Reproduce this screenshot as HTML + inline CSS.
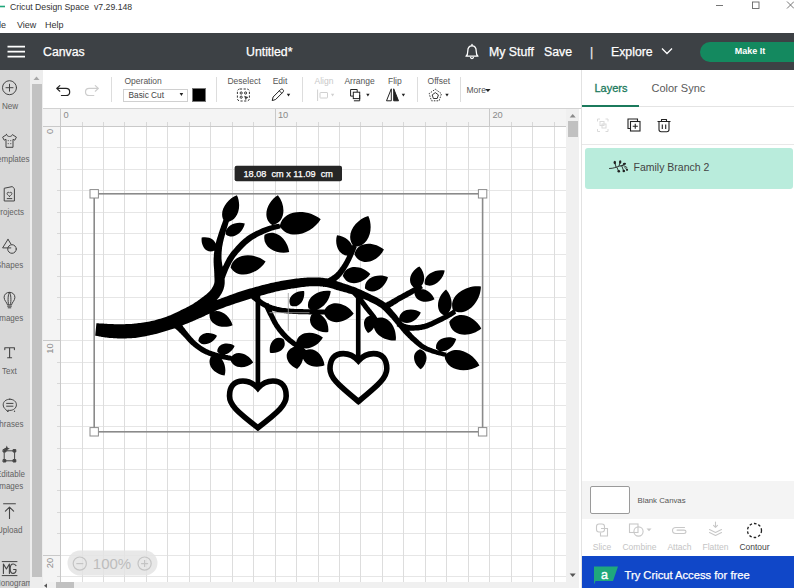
<!DOCTYPE html>
<html>
<head>
<meta charset="utf-8">
<title>Cricut Design Space</title>
<style>
*{box-sizing:border-box;margin:0;padding:0}
html,body{width:794px;height:588px;overflow:hidden;background:#fff;font-family:"Liberation Sans",sans-serif;}
body{position:relative;color:#444}
.abs{position:absolute}
.t{position:absolute;white-space:nowrap;line-height:1}
.c{position:absolute;white-space:nowrap;line-height:1;transform:translateX(-50%)}
svg{overflow:visible}
#titlebar{left:0;top:0;width:794px;height:33px;background:#fff}
#header{left:0;top:33px;width:794px;height:37px;background:#3d4145}
#sidebar{left:0;top:70px;width:30px;height:518px;background:#d8d8d8}
#sscroll{left:30px;top:70px;width:13px;height:518px;background:#ededed}
#sthumb{left:32px;top:84px;width:10px;height:493px;background:#c2c2c2}
#toolbar{left:43px;top:70px;width:538px;height:38px;background:#fff}
#rulertop{left:43px;top:108px;width:523px;height:18px;background:#f4f4f4;border-top:1px solid #cfcfcf}
#rulerleft{left:43px;top:109px;width:18px;height:473px;background:#f4f4f4}
#canvas{left:61px;top:126px;width:505px;height:456px;background:#fff}
#vscroll{left:566px;top:109px;width:13px;height:479px;background:#f0f0f0}
#vthumb{left:568px;top:121px;width:10px;height:16px;background:#c1c1c1}
#hscroll{left:43px;top:582px;width:523px;height:6px;background:#f0f0f0}
#hthumb{left:56px;top:582px;width:18px;height:6px;background:#c1c1c1}
#panel{left:581px;top:70px;width:213px;height:518px;background:#fff;border-left:1px solid #e2e2e2}
.side{font-size:9px;color:#626262}
.tb{font-size:8.5px;color:#555}
.hd{font-size:12.3px;color:#fff;top:46px;-webkit-text-stroke:0.25px #fff}
.sep{position:absolute;top:77px;width:1px;height:25px;background:#ddd}
</style>
</head>
<body>
<div id="titlebar" class="abs"></div>
<div id="header" class="abs"></div>
<div id="sidebar" class="abs"></div>
<div id="sscroll" class="abs"></div>
<div id="sthumb" class="abs"></div>
<div id="toolbar" class="abs"></div>
<div id="canvas" class="abs"></div>
<div id="rulertop" class="abs"></div>
<div id="rulerleft" class="abs"></div>
<div id="vscroll" class="abs"></div>
<div id="vthumb" class="abs"></div>
<div id="hscroll" class="abs"></div>
<div id="hthumb" class="abs"></div>
<div id="panel" class="abs"></div>

<svg width="794" height="588" viewBox="0 0 794 588" style="position:absolute;left:0;top:0">
<path d="M61,147.50H566 M61,169.50H566 M61,190.50H566 M61,212.50H566 M61,233.50H566 M61,254.50H566 M61,276.50H566 M61,297.50H566 M61,319.50H566 M61,340.50H566 M61,362.50H566 M61,383.50H566 M61,405.50H566 M61,426.50H566 M61,448.50H566 M61,469.50H566 M61,490.50H566 M61,512.50H566 M61,533.50H566 M61,555.50H566 M61,576.50H566" stroke="#e6e6e6" stroke-width="1" fill="none"/>
<path d="M82.50,126V582 M103.50,126V582 M124.50,126V582 M146.50,126V582 M167.50,126V582 M189.50,126V582 M210.50,126V582 M232.50,126V582 M253.50,126V582 M275.50,126V582 M296.50,126V582 M318.50,126V582 M339.50,126V582 M360.50,126V582 M382.50,126V582 M403.50,126V582 M425.50,126V582 M446.50,126V582 M468.50,126V582 M489.50,126V582 M511.50,126V582 M532.50,126V582 M554.50,126V582" stroke="#dddddd" stroke-width="1" fill="none"/>
<path d="M82.50,122V126 M103.50,122V126 M124.50,122V126 M146.50,122V126 M167.50,122V126 M189.50,122V126 M210.50,122V126 M232.50,122V126 M253.50,122V126 M275.50,122V126 M296.50,122V126 M318.50,122V126 M339.50,122V126 M360.50,122V126 M382.50,122V126 M403.50,122V126 M425.50,122V126 M446.50,122V126 M468.50,122V126 M489.50,122V126 M511.50,122V126 M532.50,122V126 M554.50,122V126 M57,147.50H61 M57,169.50H61 M57,190.50H61 M57,212.50H61 M57,233.50H61 M57,254.50H61 M57,276.50H61 M57,297.50H61 M57,319.50H61 M57,340.50H61 M57,362.50H61 M57,383.50H61 M57,405.50H61 M57,426.50H61 M57,448.50H61 M57,469.50H61 M57,490.50H61 M57,512.50H61 M57,533.50H61 M57,555.50H61 M57,576.50H61" stroke="#d8d8d8" stroke-width="1" fill="none"/>
<path d="M60.50,109V126 M43,126.50H61 M275.50,109V126 M43,340.50H61 M489.50,109V126 M43,555.50H61 M60.50,126V582 M61,126.50H566" stroke="#c9c9c9" stroke-width="1" fill="none"/>
<text x="63.4" y="118.3" font-size="9.3" fill="#8a8a8a" font-family="Liberation Sans, sans-serif">0</text>
<text transform="translate(52.5,128.8) rotate(-90)" text-anchor="end" font-size="9.3" fill="#8a8a8a" font-family="Liberation Sans, sans-serif">0</text>
<text x="277.9" y="118.3" font-size="9.3" fill="#8a8a8a" font-family="Liberation Sans, sans-serif">10</text>
<text transform="translate(52.5,343.3) rotate(-90)" text-anchor="end" font-size="9.3" fill="#8a8a8a" font-family="Liberation Sans, sans-serif">10</text>
<text x="492.4" y="118.3" font-size="9.3" fill="#8a8a8a" font-family="Liberation Sans, sans-serif">20</text>
<text transform="translate(52.5,557.8) rotate(-90)" text-anchor="end" font-size="9.3" fill="#8a8a8a" font-family="Liberation Sans, sans-serif">20</text>
</svg>
<svg width="794" height="588" viewBox="0 0 794 588" style="position:absolute;left:0;top:0" id="art">
<path fill="#000" d="M96.4,323.3 L96.5,323.3 L96.7,323.3 L96.9,323.3 L97.1,323.3 L97.4,323.3 L97.6,323.3 L98.0,323.3 L98.3,323.3 L98.6,323.3 L99.0,323.4 L99.3,323.4 L99.7,323.4 L100.1,323.4 L100.5,323.4 L100.9,323.5 L101.3,323.5 L101.6,323.5 L102.0,323.5 L102.4,323.6 L102.9,323.6 L103.3,323.6 L103.7,323.6 L104.2,323.7 L104.7,323.7 L105.3,323.7 L105.8,323.8 L106.4,323.8 L107.0,323.8 L107.6,323.9 L108.2,323.9 L108.9,324.0 L109.5,324.0 L110.2,324.0 L110.9,324.1 L111.6,324.1 L112.3,324.1 L113.2,324.1 L114.0,324.2 L114.9,324.2 L115.9,324.2 L116.9,324.2 L117.8,324.2 L118.8,324.2 L119.8,324.2 L120.9,324.2 L121.9,324.2 L122.9,324.2 L123.9,324.2 L124.9,324.2 L125.9,324.1 L126.9,324.1 L127.8,324.1 L128.8,324.1 L129.7,324.0 L130.7,324.0 L131.7,323.9 L132.7,323.8 L133.7,323.7 L134.8,323.6 L136.0,323.5 L137.4,323.3 L138.8,323.1 L140.2,322.9 L141.7,322.7 L143.3,322.5 L144.9,322.2 L146.5,322.0 L148.1,321.7 L149.7,321.4 L151.3,321.0 L152.8,320.7 L154.3,320.4 L155.8,320.0 L157.3,319.6 L158.9,319.1 L160.4,318.7 L161.9,318.2 L163.4,317.7 L165.0,317.2 L166.5,316.7 L168.0,316.1 L169.6,315.6 L171.2,315.0 L172.7,314.5 L174.3,313.9 L175.9,313.4 L177.5,312.8 L179.1,312.1 L180.8,311.5 L182.4,310.8 L184.1,310.2 L185.7,309.6 L187.3,309.0 L188.8,308.4 L190.2,307.9 L191.6,307.4 L192.8,306.9 L194.0,306.5 L195.1,306.1 L196.2,305.7 L197.2,305.4 L198.2,305.1 L199.1,304.8 L200.1,304.4 L201.0,304.1 L202.0,303.9 L203.0,303.6 L204.0,303.3 L204.9,303.0 L205.9,302.8 L206.8,302.6 L207.6,302.4 L208.5,302.2 L209.3,302.0 L210.2,301.9 L211.1,301.7 L212.0,301.4 L213.1,301.2 L214.2,300.9 L215.4,300.5 L216.7,300.0 L218.2,299.5 L219.8,299.0 L221.4,298.3 L223.1,297.7 L224.9,297.0 L226.6,296.4 L228.4,295.7 L230.2,295.0 L232.0,294.4 L233.8,293.7 L235.4,293.2 L237.1,292.6 L238.7,292.1 L240.3,291.6 L241.9,291.0 L243.5,290.5 L245.1,290.1 L246.7,289.6 L248.3,289.1 L249.9,288.6 L251.5,288.2 L253.1,287.7 L254.7,287.3 L256.2,286.8 L257.8,286.4 L259.4,286.0 L261.0,285.5 L262.6,285.1 L264.2,284.7 L265.9,284.3 L267.5,283.9 L269.1,283.5 L270.7,283.1 L272.3,282.7 L274.0,282.4 L275.6,282.0 L277.2,281.7 L278.9,281.4 L280.5,281.1 L282.1,280.8 L283.7,280.5 L285.4,280.2 L287.0,280.0 L288.6,279.7 L290.2,279.5 L291.8,279.3 L293.4,279.0 L294.9,278.8 L296.5,278.6 L298.1,278.5 L299.6,278.3 L301.2,278.1 L302.8,278.0 L304.3,277.8 L305.9,277.7 L307.4,277.6 L308.9,277.5 L310.4,277.4 L311.9,277.4 L313.3,277.4 L314.7,277.4 L316.1,277.4 L317.4,277.5 L318.8,277.5 L320.1,277.6 L321.4,277.7 L322.7,277.8 L324.0,278.0 L325.2,278.2 L326.5,278.3 L327.7,278.6 L329.0,278.8 L330.2,279.1 L331.4,279.4 L332.6,279.7 L333.7,280.1 L334.8,280.4 L335.9,280.8 L336.9,281.2 L338.0,281.5 L339.1,281.9 L340.1,282.3 L341.2,282.6 L342.4,283.0 L343.6,283.4 L344.8,283.8 L346.0,284.2 L347.3,284.6 L348.5,285.0 L349.8,285.5 L351.1,285.9 L352.4,286.4 L353.7,286.8 L355.0,287.3 L356.3,287.8 L357.6,288.4 L358.9,288.9 L360.2,289.5 L361.5,290.1 L362.8,290.7 L364.1,291.3 L365.4,291.9 L366.7,292.5 L367.9,293.1 L369.2,293.7 L370.4,294.3 L371.5,294.9 L372.7,295.4 L373.8,296.0 L374.9,296.5 L376.0,297.1 L377.1,297.6 L378.1,298.2 L379.2,298.8 L380.3,299.4 L381.3,300.0 L382.3,300.7 L383.3,301.3 L384.3,302.1 L385.3,302.8 L386.2,303.6 L387.1,304.4 L387.9,305.2 L388.8,306.0 L389.5,306.9 L390.3,307.7 L391.0,308.5 L391.7,309.3 L392.4,310.1 L393.1,310.9 L393.8,311.7 L394.5,312.4 L395.1,313.2 L395.8,314.0 L396.4,314.8 L397.1,315.6 L397.7,316.4 L398.3,317.2 L398.8,318.0 L399.4,318.7 L400.0,319.5 L400.6,320.2 L401.2,321.0 L401.8,321.8 L402.5,322.5 L403.1,323.3 L403.7,324.1 L404.3,324.8 L404.9,325.6 L405.5,326.3 L406.1,327.1 L406.7,327.8 L407.3,328.6 L408.0,329.3 L408.6,330.0 L409.3,330.8 L410.0,331.6 L410.7,332.3 L411.5,333.1 L412.2,333.9 L412.9,334.7 L413.7,335.4 L414.4,336.2 L415.2,336.9 L415.9,337.6 L416.7,338.3 L417.4,339.0 L418.1,339.6 L418.8,340.3 L419.5,340.9 L420.2,341.5 L420.9,342.1 L421.5,342.6 L422.2,343.2 L422.9,343.7 L423.6,344.2 L424.3,344.7 L425.0,345.1 L425.8,345.6 L426.6,346.0 L427.5,346.5 L428.4,346.9 L429.4,347.3 L430.4,347.7 L431.4,348.1 L432.5,348.5 L433.5,348.9 L434.5,349.2 L435.5,349.6 L436.5,349.9 L437.4,350.2 L438.3,350.5 L439.1,350.8 L440.0,351.0 L440.9,351.3 L441.8,351.5 L442.6,351.8 L443.4,352.0 L444.2,352.2 L444.9,352.3 L445.5,352.5 L446.1,352.6 L446.5,352.8 L445.5,356.8 L445.1,356.7 L444.5,356.6 L443.9,356.5 L443.2,356.4 L442.4,356.2 L441.6,356.0 L440.7,355.8 L439.8,355.6 L438.9,355.4 L437.9,355.1 L436.9,354.9 L436.0,354.6 L435.1,354.3 L434.1,354.0 L433.1,353.7 L432.0,353.4 L430.9,353.0 L429.8,352.6 L428.7,352.2 L427.6,351.8 L426.5,351.4 L425.5,351.0 L424.4,350.5 L423.4,350.0 L422.5,349.5 L421.6,349.0 L420.7,348.4 L419.9,347.9 L419.1,347.3 L418.3,346.7 L417.5,346.1 L416.8,345.5 L416.1,344.9 L415.3,344.3 L414.6,343.7 L413.8,343.0 L413.0,342.3 L412.2,341.6 L411.4,340.9 L410.6,340.2 L409.8,339.4 L409.0,338.6 L408.2,337.9 L407.4,337.1 L406.6,336.3 L405.8,335.5 L405.1,334.7 L404.4,334.0 L403.6,333.2 L402.9,332.4 L402.3,331.6 L401.6,330.9 L401.0,330.1 L400.3,329.3 L399.7,328.6 L399.1,327.8 L398.4,327.0 L397.8,326.3 L397.2,325.6 L396.6,324.8 L395.9,324.0 L395.3,323.3 L394.7,322.5 L394.1,321.8 L393.4,321.0 L392.8,320.3 L392.2,319.5 L391.6,318.8 L391.0,318.1 L390.3,317.4 L389.7,316.7 L389.0,315.9 L388.3,315.2 L387.6,314.4 L386.9,313.7 L386.2,312.9 L385.5,312.2 L384.8,311.4 L384.0,310.7 L383.3,310.0 L382.6,309.4 L381.8,308.7 L381.1,308.1 L380.3,307.5 L379.5,307.0 L378.6,306.4 L377.7,305.9 L376.8,305.3 L375.9,304.8 L374.9,304.3 L373.9,303.8 L372.9,303.3 L371.8,302.7 L370.7,302.2 L369.6,301.7 L368.5,301.1 L367.3,300.6 L366.1,300.1 L364.9,299.5 L363.7,299.0 L362.5,298.4 L361.2,297.9 L359.9,297.4 L358.7,296.9 L357.4,296.4 L356.1,295.9 L354.9,295.4 L353.7,295.0 L352.4,294.5 L351.2,294.1 L350.0,293.7 L348.7,293.4 L347.5,293.0 L346.2,292.6 L344.9,292.3 L343.7,291.9 L342.4,291.6 L341.2,291.3 L340.0,290.9 L338.8,290.6 L337.6,290.2 L336.4,289.9 L335.3,289.5 L334.2,289.2 L333.2,288.8 L332.2,288.5 L331.2,288.2 L330.2,287.9 L329.3,287.7 L328.3,287.4 L327.3,287.2 L326.3,287.0 L325.2,286.9 L324.1,286.7 L323.0,286.6 L321.8,286.5 L320.7,286.4 L319.5,286.3 L318.3,286.2 L317.1,286.2 L315.9,286.2 L314.7,286.2 L313.4,286.2 L312.1,286.2 L310.8,286.3 L309.4,286.3 L308.1,286.4 L306.6,286.6 L305.2,286.7 L303.7,286.9 L302.2,287.1 L300.7,287.3 L299.2,287.5 L297.7,287.7 L296.2,287.9 L294.6,288.2 L293.1,288.4 L291.6,288.6 L290.0,288.9 L288.5,289.1 L286.9,289.4 L285.4,289.7 L283.8,290.0 L282.3,290.3 L280.7,290.6 L279.1,291.0 L277.6,291.3 L276.0,291.6 L274.5,292.0 L272.9,292.4 L271.4,292.8 L269.9,293.2 L268.3,293.6 L266.8,294.0 L265.2,294.5 L263.6,294.9 L262.1,295.3 L260.5,295.8 L258.9,296.3 L257.3,296.7 L255.8,297.2 L254.2,297.6 L252.7,298.1 L251.1,298.5 L249.5,299.0 L248.0,299.5 L246.4,299.9 L244.9,300.4 L243.3,300.9 L241.7,301.4 L240.1,301.9 L238.6,302.4 L236.9,303.0 L235.2,303.6 L233.5,304.2 L231.7,304.8 L229.9,305.4 L228.1,306.0 L226.4,306.6 L224.7,307.3 L223.0,307.9 L221.5,308.4 L220.0,309.0 L218.6,309.5 L217.4,310.0 L216.3,310.5 L215.3,310.9 L214.3,311.3 L213.5,311.7 L212.7,312.1 L211.9,312.5 L211.2,312.8 L210.5,313.2 L209.7,313.6 L208.9,313.9 L208.0,314.3 L207.2,314.7 L206.3,315.1 L205.4,315.5 L204.6,316.0 L203.7,316.4 L202.8,316.8 L201.9,317.2 L200.9,317.7 L199.9,318.1 L198.8,318.6 L197.6,319.1 L196.4,319.6 L195.1,320.2 L193.7,320.8 L192.2,321.4 L190.7,322.0 L189.1,322.7 L187.4,323.4 L185.7,324.1 L184.0,324.7 L182.3,325.4 L180.6,326.1 L178.9,326.7 L177.3,327.3 L175.7,327.9 L174.1,328.4 L172.5,329.0 L170.8,329.5 L169.2,330.1 L167.6,330.6 L165.9,331.1 L164.3,331.6 L162.6,332.1 L161.0,332.5 L159.3,333.0 L157.7,333.4 L156.0,333.9 L154.3,334.3 L152.5,334.7 L150.8,335.1 L149.1,335.5 L147.4,335.8 L145.7,336.2 L144.1,336.5 L142.4,336.8 L140.9,337.1 L139.4,337.3 L138.0,337.5 L136.6,337.7 L135.2,337.9 L133.9,338.0 L132.7,338.1 L131.5,338.2 L130.4,338.3 L129.3,338.3 L128.2,338.3 L127.2,338.3 L126.2,338.4 L125.2,338.4 L124.1,338.4 L123.1,338.4 L121.9,338.4 L120.8,338.4 L119.7,338.4 L118.6,338.4 L117.5,338.4 L116.5,338.3 L115.4,338.3 L114.4,338.2 L113.5,338.2 L112.6,338.1 L111.7,338.1 L110.8,338.0 L109.9,338.0 L109.1,337.9 L108.3,337.8 L107.6,337.7 L106.9,337.6 L106.2,337.5 L105.6,337.4 L105.0,337.4 L104.4,337.3 L103.8,337.2 L103.3,337.1 L102.8,337.0 L102.2,337.0 L101.7,336.9 L101.2,336.8 L100.8,336.7 L100.4,336.6 L100.0,336.5 L99.6,336.5 L99.2,336.4 L98.9,336.3 L98.6,336.3 L98.3,336.2 L98.0,336.2 L97.7,336.1 L97.4,336.0 L97.1,336.0 L96.8,335.9 L96.5,335.9 L96.3,335.8 L96.0,335.8 L95.8,335.8 L95.6,335.7 L95.4,335.7 L95.2,335.7Z M229.0,221.4 L228.8,222.0 L228.5,222.8 L228.2,223.8 L227.9,224.8 L227.6,225.9 L227.2,227.1 L226.8,228.4 L226.4,229.6 L226.1,230.9 L225.7,232.1 L225.4,233.3 L225.1,234.4 L224.8,235.5 L224.5,236.6 L224.2,237.7 L223.9,238.8 L223.6,239.9 L223.4,241.0 L223.1,242.1 L222.9,243.1 L222.7,244.2 L222.5,245.2 L222.3,246.3 L222.1,247.3 L222.0,248.3 L221.9,249.4 L221.8,250.4 L221.7,251.5 L221.6,252.5 L221.6,253.6 L221.5,254.6 L221.5,255.7 L221.5,256.7 L221.5,257.8 L221.5,258.8 L221.6,259.8 L221.7,260.8 L221.8,261.8 L222.0,262.8 L222.1,263.8 L222.3,264.9 L222.5,266.0 L222.8,267.0 L223.0,268.1 L223.2,269.3 L223.4,270.4 L223.6,271.5 L223.7,272.6 L223.9,273.6 L224.0,274.6 L224.1,275.6 L224.3,276.6 L224.4,277.6 L224.6,278.6 L224.7,279.7 L224.7,280.8 L224.7,282.0 L224.7,283.1 L224.6,284.3 L224.4,285.6 L224.2,286.7 L223.9,287.8 L223.6,288.9 L223.2,289.9 L222.8,291.0 L222.3,292.0 L221.8,292.9 L221.3,293.9 L220.7,294.8 L220.2,295.7 L219.6,296.5 L218.9,297.4 L218.2,298.3 L217.5,299.1 L216.7,299.9 L216.0,300.7 L215.2,301.5 L214.4,302.2 L213.5,302.9 L212.7,303.5 L211.8,304.2 L211.0,304.8 L210.1,305.4 L209.2,306.0 L208.2,306.6 L207.2,307.2 L206.2,307.8 L205.1,308.4 L204.0,309.0 L202.9,309.5 L201.8,310.1 L200.6,310.6 L199.5,311.1 L198.3,311.6 L197.1,312.1 L195.9,312.6 L194.7,313.0 L193.5,313.4 L192.2,313.9 L190.9,314.2 L189.6,314.6 L188.3,315.0 L187.1,315.3 L185.8,315.6 L184.6,315.9 L183.3,316.2 L182.2,316.5 L181.0,316.8 L179.9,317.1 L178.6,317.4 L177.4,317.7 L176.2,317.9 L175.0,318.2 L173.8,318.4 L172.7,318.6 L171.6,318.8 L170.7,319.0 L169.8,319.2 L169.1,319.3 L168.5,319.4 L167.5,316.6 L168.1,316.3 L168.8,316.0 L169.6,315.6 L170.5,315.2 L171.4,314.8 L172.5,314.3 L173.5,313.8 L174.6,313.3 L175.7,312.7 L176.9,312.2 L177.9,311.7 L179.0,311.2 L180.0,310.7 L181.1,310.1 L182.3,309.6 L183.4,309.0 L184.5,308.5 L185.7,307.9 L186.8,307.3 L187.9,306.8 L189.0,306.2 L190.1,305.6 L191.1,305.0 L192.1,304.4 L193.0,303.9 L194.0,303.2 L195.0,302.6 L195.9,302.0 L196.8,301.4 L197.8,300.7 L198.7,300.1 L199.6,299.5 L200.4,298.8 L201.2,298.2 L202.1,297.6 L202.8,297.0 L203.6,296.4 L204.4,295.8 L205.1,295.2 L205.8,294.7 L206.5,294.2 L207.2,293.6 L207.8,293.1 L208.3,292.6 L208.9,292.1 L209.4,291.6 L209.8,291.1 L210.3,290.6 L210.7,290.0 L211.2,289.4 L211.6,288.8 L212.0,288.2 L212.3,287.6 L212.7,287.0 L213.0,286.4 L213.3,285.8 L213.6,285.2 L213.8,284.6 L214.0,284.0 L214.2,283.4 L214.3,282.9 L214.4,282.3 L214.5,281.6 L214.5,280.9 L214.5,280.1 L214.5,279.3 L214.5,278.4 L214.4,277.5 L214.4,276.5 L214.3,275.5 L214.3,274.4 L214.3,273.4 L214.2,272.4 L214.2,271.4 L214.1,270.4 L214.1,269.4 L214.0,268.3 L213.9,267.2 L213.8,266.0 L213.7,264.8 L213.7,263.6 L213.6,262.4 L213.6,261.2 L213.6,260.0 L213.6,258.8 L213.7,257.6 L213.8,256.5 L213.8,255.3 L213.9,254.2 L214.0,253.0 L214.2,251.9 L214.3,250.7 L214.5,249.6 L214.6,248.4 L214.8,247.3 L215.1,246.1 L215.3,244.9 L215.6,243.8 L215.9,242.6 L216.2,241.5 L216.5,240.3 L216.8,239.2 L217.2,238.1 L217.5,237.0 L217.9,235.9 L218.2,234.8 L218.6,233.7 L218.9,232.6 L219.3,231.5 L219.7,230.2 L220.1,229.0 L220.6,227.7 L221.0,226.5 L221.4,225.2 L221.9,224.0 L222.3,222.9 L222.6,221.9 L223.0,221.0 L223.2,220.2 L223.4,219.6Z M218.4,277.9 L218.6,277.3 L218.9,276.5 L219.2,275.6 L219.6,274.5 L220.1,273.4 L220.5,272.2 L221.0,270.9 L221.6,269.6 L222.1,268.3 L222.6,267.1 L223.2,265.8 L223.8,264.7 L224.3,263.6 L224.8,262.5 L225.3,261.5 L225.9,260.5 L226.4,259.4 L227.0,258.3 L227.6,257.3 L228.3,256.2 L229.1,255.0 L229.8,253.9 L230.7,252.8 L231.6,251.6 L232.6,250.4 L233.7,249.2 L234.8,247.9 L236.0,246.6 L237.2,245.2 L238.4,243.9 L239.8,242.6 L241.1,241.3 L242.5,240.1 L243.9,238.8 L245.3,237.7 L246.7,236.6 L248.2,235.6 L249.7,234.6 L251.2,233.7 L252.8,232.8 L254.4,231.9 L256.0,231.1 L257.5,230.4 L259.1,229.7 L260.6,229.0 L262.1,228.3 L263.6,227.8 L265.0,227.2 L266.4,226.7 L267.8,226.2 L269.3,225.8 L270.7,225.4 L272.1,225.1 L273.5,224.8 L274.8,224.6 L276.0,224.3 L277.0,224.1 L278.0,224.0 L278.8,223.8 L279.4,223.7 L280.6,228.3 L279.9,228.5 L279.0,228.7 L278.1,229.0 L277.0,229.2 L275.9,229.5 L274.7,229.8 L273.4,230.2 L272.1,230.6 L270.8,231.0 L269.6,231.4 L268.3,231.9 L267.0,232.4 L265.8,233.0 L264.4,233.6 L263.0,234.2 L261.5,234.9 L260.1,235.6 L258.6,236.3 L257.1,237.1 L255.7,237.9 L254.3,238.8 L252.9,239.6 L251.6,240.5 L250.3,241.4 L249.0,242.4 L247.8,243.4 L246.5,244.5 L245.3,245.7 L244.0,246.9 L242.8,248.2 L241.6,249.4 L240.5,250.7 L239.3,251.9 L238.3,253.1 L237.3,254.3 L236.4,255.4 L235.5,256.5 L234.8,257.5 L234.1,258.5 L233.5,259.4 L232.9,260.4 L232.3,261.3 L231.8,262.3 L231.3,263.3 L230.8,264.3 L230.3,265.3 L229.8,266.3 L229.2,267.3 L228.7,268.4 L228.2,269.5 L227.7,270.7 L227.2,271.9 L226.7,273.2 L226.2,274.4 L225.8,275.6 L225.3,276.7 L225.0,277.7 L224.6,278.7 L224.3,279.5 L224.0,280.1Z M175.5,316.5 L175.8,316.9 L176.1,317.3 L176.5,317.9 L177.0,318.5 L177.5,319.2 L178.1,319.9 L178.7,320.7 L179.3,321.4 L179.9,322.2 L180.5,323.0 L181.1,323.8 L181.7,324.5 L182.2,325.2 L182.8,325.9 L183.3,326.7 L183.8,327.4 L184.4,328.1 L184.9,328.8 L185.4,329.5 L186.0,330.2 L186.5,330.9 L187.1,331.6 L187.6,332.3 L188.2,333.0 L188.8,333.8 L189.4,334.5 L190.0,335.2 L190.7,336.0 L191.3,336.7 L191.9,337.4 L192.5,338.1 L193.2,338.8 L193.8,339.5 L194.5,340.2 L195.1,340.8 L195.8,341.4 L196.5,342.1 L197.3,342.7 L198.0,343.3 L198.8,343.9 L199.5,344.5 L200.3,345.1 L201.1,345.7 L201.9,346.2 L202.7,346.8 L203.6,347.3 L204.4,347.8 L205.3,348.3 L206.1,348.7 L207.0,349.2 L207.9,349.6 L208.8,350.0 L209.7,350.4 L210.6,350.8 L211.6,351.1 L212.6,351.5 L213.6,351.8 L214.6,352.1 L215.6,352.5 L216.7,352.8 L217.8,353.1 L219.1,353.4 L220.4,353.7 L221.8,354.0 L223.3,354.3 L224.7,354.6 L226.1,354.9 L227.4,355.1 L228.7,355.4 L229.8,355.6 L230.7,355.7 L231.5,355.9 L230.5,360.7 L229.8,360.6 L228.9,360.4 L227.8,360.2 L226.6,360.0 L225.2,359.8 L223.8,359.6 L222.3,359.3 L220.8,359.0 L219.4,358.7 L217.9,358.4 L216.6,358.1 L215.3,357.8 L214.1,357.5 L213.0,357.1 L211.9,356.8 L210.8,356.4 L209.8,356.0 L208.7,355.7 L207.7,355.2 L206.7,354.8 L205.7,354.4 L204.7,353.9 L203.7,353.4 L202.7,352.9 L201.8,352.4 L200.8,351.9 L199.9,351.3 L199.0,350.7 L198.1,350.1 L197.2,349.5 L196.3,348.8 L195.5,348.2 L194.6,347.6 L193.8,346.9 L193.0,346.2 L192.2,345.6 L191.4,344.9 L190.6,344.2 L189.9,343.4 L189.1,342.7 L188.4,341.9 L187.7,341.2 L187.0,340.5 L186.4,339.7 L185.7,339.0 L185.1,338.3 L184.4,337.6 L183.8,337.0 L183.2,336.3 L182.5,335.6 L181.9,335.0 L181.2,334.3 L180.6,333.6 L180.0,333.0 L179.4,332.4 L178.8,331.8 L178.2,331.2 L177.5,330.6 L176.9,330.0 L176.3,329.5 L175.7,328.9 L175.0,328.4 L174.3,327.8 L173.5,327.2 L172.8,326.7 L172.0,326.1 L171.3,325.6 L170.6,325.1 L170.0,324.6 L169.4,324.2 L168.9,323.8 L168.5,323.5Z M252.4,290.5 L252.7,290.9 L253.1,291.3 L253.6,291.8 L254.0,292.4 L254.6,293.0 L255.1,293.6 L255.7,294.2 L256.3,294.9 L256.9,295.5 L257.6,296.2 L258.2,296.7 L258.8,297.3 L259.4,297.8 L260.1,298.3 L260.7,298.9 L261.4,299.4 L262.1,299.9 L262.7,300.4 L263.4,300.9 L264.1,301.4 L264.9,301.8 L265.6,302.3 L266.4,302.7 L267.2,303.1 L268.0,303.5 L268.8,303.9 L269.7,304.3 L270.6,304.7 L271.6,305.0 L272.5,305.4 L273.5,305.7 L274.5,306.0 L275.5,306.3 L276.5,306.6 L277.5,306.9 L278.6,307.1 L279.6,307.3 L280.6,307.5 L281.7,307.7 L282.8,307.9 L283.9,308.0 L285.0,308.1 L286.2,308.3 L287.3,308.4 L288.5,308.5 L289.7,308.6 L290.9,308.7 L292.2,308.8 L293.4,308.8 L294.7,308.9 L295.9,309.0 L297.2,309.0 L298.5,309.1 L299.9,309.1 L301.2,309.1 L302.6,309.1 L303.9,309.2 L305.3,309.2 L306.7,309.2 L308.1,309.3 L309.5,309.3 L311.0,309.3 L312.6,309.3 L314.3,309.4 L315.9,309.4 L317.5,309.4 L319.1,309.5 L320.6,309.5 L321.9,309.5 L323.2,309.5 L324.2,309.5 L325.0,309.6 L325.0,314.4 L324.2,314.4 L323.1,314.4 L321.9,314.4 L320.5,314.4 L319.0,314.4 L317.5,314.4 L315.8,314.4 L314.2,314.4 L312.5,314.4 L310.9,314.4 L309.4,314.4 L307.9,314.3 L306.6,314.3 L305.2,314.3 L303.8,314.3 L302.5,314.3 L301.1,314.2 L299.8,314.2 L298.4,314.2 L297.1,314.1 L295.7,314.1 L294.4,314.0 L293.1,313.9 L291.8,313.8 L290.6,313.8 L289.3,313.7 L288.1,313.6 L286.9,313.4 L285.7,313.3 L284.5,313.2 L283.3,313.1 L282.1,312.9 L280.9,312.7 L279.8,312.5 L278.6,312.3 L277.4,312.1 L276.3,311.8 L275.2,311.6 L274.1,311.3 L273.0,310.9 L271.9,310.6 L270.8,310.3 L269.8,309.9 L268.8,309.5 L267.8,309.1 L266.8,308.7 L265.8,308.3 L264.8,307.9 L263.9,307.4 L263.0,306.9 L262.1,306.4 L261.3,305.9 L260.4,305.4 L259.6,304.9 L258.9,304.3 L258.1,303.8 L257.4,303.3 L256.6,302.8 L255.9,302.2 L255.2,301.7 L254.5,301.2 L253.7,300.6 L252.9,300.0 L252.2,299.4 L251.5,298.7 L250.7,298.1 L250.1,297.6 L249.4,297.0 L248.9,296.5 L248.4,296.1 L248.0,295.8 L247.6,295.5Z M268.5,302.9 L268.7,303.4 L269.0,303.9 L269.3,304.6 L269.6,305.4 L270.0,306.2 L270.4,307.1 L270.8,308.1 L271.2,309.0 L271.6,310.0 L272.1,310.9 L272.5,311.9 L273.0,312.8 L273.4,313.8 L273.9,314.8 L274.4,315.8 L274.9,316.8 L275.4,317.8 L275.9,318.9 L276.5,319.9 L277.0,320.9 L277.6,321.9 L278.1,322.9 L278.7,323.9 L279.4,324.8 L280.0,325.8 L280.7,326.7 L281.4,327.7 L282.2,328.7 L283.0,329.6 L283.8,330.6 L284.6,331.5 L285.4,332.4 L286.2,333.3 L287.0,334.2 L287.8,335.0 L288.5,335.8 L289.3,336.5 L290.0,337.1 L290.7,337.8 L291.5,338.4 L292.2,339.0 L293.0,339.6 L293.8,340.2 L294.5,340.8 L295.3,341.4 L296.1,342.0 L296.9,342.6 L297.7,343.2 L298.5,343.9 L299.3,344.5 L300.2,345.2 L301.0,345.9 L301.9,346.6 L302.7,347.3 L303.5,348.0 L304.3,348.6 L305.0,349.2 L305.6,349.7 L306.1,350.1 L306.5,350.5 L303.5,354.3 L303.0,354.0 L302.5,353.5 L301.9,353.0 L301.2,352.5 L300.4,351.9 L299.6,351.2 L298.7,350.5 L297.9,349.9 L297.0,349.2 L296.1,348.5 L295.3,347.8 L294.5,347.2 L293.8,346.6 L293.0,346.0 L292.2,345.5 L291.5,344.9 L290.7,344.3 L289.9,343.7 L289.1,343.1 L288.2,342.4 L287.4,341.7 L286.6,341.0 L285.7,340.3 L284.9,339.4 L284.0,338.6 L283.2,337.7 L282.3,336.8 L281.5,335.9 L280.6,334.9 L279.8,333.9 L279.0,332.9 L278.1,331.9 L277.3,330.9 L276.5,329.8 L275.8,328.8 L275.0,327.8 L274.3,326.7 L273.7,325.6 L273.0,324.5 L272.4,323.4 L271.8,322.3 L271.3,321.3 L270.7,320.2 L270.2,319.1 L269.7,318.1 L269.2,317.1 L268.7,316.1 L268.2,315.2 L267.7,314.2 L267.3,313.2 L266.8,312.2 L266.3,311.2 L265.9,310.3 L265.4,309.3 L265.0,308.4 L264.6,307.6 L264.3,306.8 L264.0,306.2 L263.7,305.6 L263.5,305.1Z M320.9,280.9 L321.3,280.7 L322.0,280.5 L322.6,280.3 L323.3,280.1 L324.1,279.8 L324.9,279.5 L325.7,279.2 L326.5,278.9 L327.3,278.6 L328.1,278.3 L328.7,278.0 L329.4,277.6 L330.0,277.3 L330.6,276.9 L331.3,276.5 L331.9,276.1 L332.5,275.6 L333.1,275.2 L333.8,274.7 L334.4,274.2 L335.0,273.7 L335.6,273.2 L336.2,272.6 L336.8,272.0 L337.4,271.4 L337.9,270.7 L338.5,270.0 L339.1,269.2 L339.7,268.4 L340.3,267.6 L340.9,266.8 L341.5,265.9 L342.0,265.1 L342.6,264.2 L343.1,263.4 L343.6,262.6 L344.1,261.8 L344.5,261.0 L345.0,260.2 L345.4,259.3 L345.8,258.5 L346.2,257.7 L346.6,256.9 L347.0,256.0 L347.4,255.2 L347.8,254.4 L348.2,253.6 L348.6,252.9 L348.9,252.1 L349.3,251.4 L349.6,250.6 L350.0,249.8 L350.3,249.1 L350.7,248.4 L351.0,247.7 L351.3,247.0 L351.6,246.4 L351.8,245.9 L352.0,245.4 L352.2,245.0 L356.8,247.0 L356.6,247.4 L356.5,247.8 L356.2,248.4 L356.0,249.0 L355.7,249.7 L355.4,250.4 L355.1,251.2 L354.8,251.9 L354.5,252.7 L354.1,253.6 L353.8,254.4 L353.4,255.1 L353.1,255.9 L352.7,256.7 L352.4,257.5 L352.0,258.3 L351.6,259.2 L351.2,260.1 L350.8,261.0 L350.3,261.8 L349.9,262.7 L349.4,263.6 L348.9,264.5 L348.4,265.4 L347.9,266.3 L347.4,267.2 L346.8,268.1 L346.3,269.0 L345.7,269.9 L345.1,270.8 L344.5,271.8 L343.8,272.7 L343.2,273.5 L342.6,274.4 L341.9,275.2 L341.2,276.0 L340.6,276.8 L339.9,277.5 L339.2,278.2 L338.5,278.9 L337.8,279.5 L337.1,280.1 L336.4,280.7 L335.7,281.3 L334.9,281.8 L334.2,282.4 L333.4,282.9 L332.6,283.4 L331.8,283.9 L330.8,284.3 L329.9,284.7 L328.9,285.1 L328.0,285.5 L327.1,285.8 L326.2,286.1 L325.4,286.3 L324.7,286.6 L324.0,286.8 L323.5,287.0 L323.1,287.1Z M354.1,288.2 L354.4,288.6 L354.8,289.1 L355.4,289.7 L356.0,290.4 L356.6,291.1 L357.3,291.9 L358.0,292.7 L358.7,293.5 L359.5,294.4 L360.2,295.2 L360.9,296.1 L361.5,296.9 L362.1,297.6 L362.8,298.4 L363.4,299.3 L364.0,300.1 L364.6,300.9 L365.2,301.7 L365.8,302.5 L366.3,303.3 L366.9,304.1 L367.4,304.8 L368.0,305.5 L368.5,306.2 L369.0,306.9 L369.6,307.6 L370.1,308.3 L370.6,309.0 L371.2,309.6 L371.7,310.3 L372.2,310.9 L372.7,311.5 L373.1,312.1 L373.6,312.7 L374.0,313.3 L374.4,313.8 L374.8,314.3 L375.2,314.8 L375.6,315.3 L375.9,315.8 L376.2,316.3 L376.5,316.7 L376.8,317.1 L377.0,317.5 L377.3,317.9 L377.5,318.2 L377.7,318.4 L377.8,318.7 L374.2,321.3 L374.0,321.1 L373.8,320.9 L373.6,320.6 L373.3,320.2 L373.0,319.9 L372.7,319.5 L372.4,319.1 L372.1,318.7 L371.7,318.2 L371.3,317.8 L371.0,317.3 L370.6,316.8 L370.2,316.3 L369.7,315.8 L369.3,315.2 L368.8,314.6 L368.3,314.0 L367.8,313.4 L367.2,312.8 L366.7,312.1 L366.2,311.4 L365.6,310.8 L365.0,310.1 L364.5,309.4 L363.9,308.6 L363.3,307.9 L362.8,307.1 L362.2,306.3 L361.6,305.5 L361.0,304.7 L360.4,303.9 L359.8,303.2 L359.3,302.4 L358.7,301.6 L358.1,300.9 L357.5,300.1 L356.9,299.4 L356.2,298.6 L355.5,297.8 L354.8,297.0 L354.0,296.2 L353.3,295.5 L352.6,294.7 L352.0,294.0 L351.3,293.3 L350.8,292.7 L350.3,292.2 L349.9,291.8Z M384.6,303.2 L384.8,303.1 L385.1,303.0 L385.3,302.9 L385.6,302.8 L385.8,302.6 L386.1,302.5 L386.4,302.4 L386.8,302.2 L387.1,302.0 L387.5,301.8 L388.0,301.6 L388.5,301.4 L389.0,301.1 L389.6,300.7 L390.2,300.4 L390.9,300.0 L391.6,299.6 L392.4,299.1 L393.1,298.7 L394.0,298.2 L394.8,297.7 L395.7,297.2 L396.6,296.7 L397.6,296.1 L398.6,295.6 L399.7,295.0 L400.8,294.4 L402.0,293.7 L403.2,293.1 L404.4,292.4 L405.6,291.8 L406.8,291.1 L408.0,290.5 L409.1,289.9 L410.2,289.3 L411.2,288.8 L412.1,288.3 L413.0,287.8 L413.9,287.3 L414.8,286.8 L415.7,286.3 L416.6,285.8 L417.3,285.4 L418.1,285.0 L418.7,284.6 L419.4,284.2 L419.9,283.9 L420.3,283.7 L422.9,288.1 L422.5,288.4 L422.0,288.7 L421.4,289.0 L420.7,289.4 L420.0,289.9 L419.2,290.4 L418.4,290.9 L417.5,291.4 L416.7,291.9 L415.7,292.5 L414.8,293.0 L413.8,293.6 L412.9,294.2 L411.8,294.8 L410.7,295.4 L409.5,296.0 L408.3,296.7 L407.1,297.4 L405.9,298.0 L404.7,298.7 L403.5,299.3 L402.4,299.9 L401.4,300.5 L400.4,301.1 L399.5,301.6 L398.6,302.1 L397.8,302.7 L397.0,303.2 L396.2,303.7 L395.5,304.2 L394.7,304.6 L394.0,305.1 L393.4,305.5 L392.7,305.9 L392.1,306.3 L391.5,306.6 L391.0,307.0 L390.4,307.3 L390.0,307.5 L389.5,307.8 L389.1,308.0 L388.8,308.2 L388.4,308.3 L388.1,308.5 L387.9,308.6 L387.7,308.7 L387.5,308.8 L387.4,308.8Z M399.4,320.9 L399.7,321.1 L400.1,321.3 L400.5,321.6 L401.0,321.9 L401.4,322.1 L401.9,322.4 L402.4,322.7 L403.0,323.0 L403.5,323.3 L404.0,323.5 L404.4,323.7 L404.9,323.9 L405.4,324.1 L406.0,324.3 L406.5,324.4 L407.1,324.6 L407.6,324.7 L408.1,324.8 L408.7,325.0 L409.3,325.1 L409.9,325.1 L410.6,325.2 L411.2,325.2 L412.0,325.3 L412.8,325.2 L413.7,325.2 L414.7,325.2 L415.7,325.1 L416.7,325.0 L417.8,324.9 L418.8,324.8 L419.9,324.7 L420.9,324.5 L421.9,324.3 L422.9,324.1 L423.9,323.9 L424.8,323.6 L425.8,323.3 L426.7,323.0 L427.7,322.6 L428.6,322.2 L429.6,321.8 L430.6,321.4 L431.5,320.9 L432.5,320.4 L433.5,319.9 L434.6,319.5 L435.6,319.0 L436.6,318.5 L437.6,318.0 L438.7,317.5 L439.8,317.0 L440.9,316.5 L441.9,316.0 L443.0,315.4 L444.0,314.9 L445.0,314.4 L445.9,313.9 L446.8,313.5 L447.6,313.1 L448.3,312.7 L449.0,312.3 L449.6,311.9 L450.2,311.6 L450.8,311.2 L451.3,310.9 L451.8,310.6 L452.2,310.3 L452.6,310.0 L453.0,309.8 L453.4,309.5 L453.7,309.3 L456.3,313.5 L456.1,313.6 L455.8,313.8 L455.4,314.1 L455.0,314.4 L454.5,314.7 L454.0,315.1 L453.5,315.4 L452.9,315.8 L452.2,316.2 L451.5,316.7 L450.8,317.1 L450.0,317.5 L449.2,318.0 L448.3,318.5 L447.4,319.0 L446.4,319.5 L445.4,320.0 L444.3,320.6 L443.2,321.2 L442.1,321.7 L441.0,322.3 L439.9,322.8 L438.9,323.3 L437.8,323.8 L436.8,324.3 L435.8,324.8 L434.8,325.2 L433.8,325.7 L432.8,326.2 L431.8,326.7 L430.7,327.1 L429.7,327.6 L428.6,328.0 L427.5,328.4 L426.4,328.8 L425.3,329.1 L424.2,329.4 L423.0,329.6 L421.8,329.9 L420.7,330.1 L419.5,330.2 L418.3,330.4 L417.2,330.5 L416.1,330.6 L415.0,330.6 L413.9,330.7 L413.0,330.7 L412.0,330.7 L411.1,330.7 L410.2,330.7 L409.4,330.7 L408.6,330.6 L407.8,330.5 L407.0,330.3 L406.3,330.2 L405.6,330.0 L405.0,329.9 L404.3,329.7 L403.7,329.5 L403.1,329.3 L402.4,329.1 L401.7,328.8 L401.0,328.5 L400.3,328.1 L399.7,327.8 L399.1,327.5 L398.5,327.2 L398.0,326.9 L397.5,326.6 L397.1,326.4 L396.8,326.2 L396.6,326.1Z M225.0,222.1 C217.2,213.5 226.5,199.0 236.9,195.3 C242.2,206.0 238.1,222.8 225.0,222.1Z M225.9,234.4 C224.7,225.3 236.7,220.9 244.8,223.6 C243.2,232.3 233.4,240.5 225.9,234.4Z M214.6,250.5 C206.5,254.5 200.5,245.5 201.7,237.6 C210.3,235.7 219.5,241.5 214.6,250.5Z M272.2,225.0 C261.1,217.9 267.4,201.3 277.9,195.3 C286.1,204.9 286.0,222.7 272.2,225.0Z M279.7,225.9 C283.7,208.7 308.1,208.9 320.7,219.3 C312.1,233.7 289.0,241.8 279.7,225.9Z M264.6,234.8 C275.6,227.5 288.1,240.0 289.2,252.0 C277.5,255.1 261.5,247.6 264.6,234.8Z M230.6,267.5 C233.7,252.3 254.6,252.3 265.6,261.4 C258.4,273.6 238.7,280.7 230.6,267.5Z M354.2,246.7 C343.8,236.0 355.2,219.7 368.3,216.1 C374.1,228.4 369.1,247.6 354.2,246.7Z M350.6,255.2 C339.6,258.0 333.9,245.0 337.0,235.3 C347.1,236.0 357.2,246.0 350.6,255.2Z M354.4,254.5 C357.0,240.8 374.6,241.2 383.9,249.6 C378.0,261.5 361.5,267.9 354.4,254.5Z M342.8,275.8 C346.4,263.3 362.6,265.4 370.3,274.1 C363.7,283.7 348.0,287.8 342.8,275.8Z M365.0,288.5 C364.0,277.1 378.5,273.0 388.0,277.2 C385.5,287.3 373.4,296.2 365.0,288.5Z M415.4,288.5 C405.6,283.1 410.5,270.8 419.4,266.5 C426.2,273.6 426.5,286.9 415.4,288.5Z M424.8,284.3 C422.9,274.7 435.7,268.6 444.7,270.6 C443.4,279.7 433.1,289.5 424.8,284.3Z M414.4,292.4 C420.5,285.0 431.5,291.1 434.5,299.3 C427.1,303.9 414.7,302.0 414.4,292.4Z M444.0,315.3 C434.0,310.4 437.8,295.5 446.0,289.4 C453.2,296.7 454.6,311.9 444.0,315.3Z M453.0,310.6 C447.8,295.6 466.4,284.4 480.9,286.5 C480.9,301.1 467.1,317.9 453.0,310.6Z M449.2,322.0 C457.3,308.6 475.2,316.1 481.3,328.6 C470.7,337.7 451.4,337.5 449.2,322.0Z M436.0,348.4 C435.2,338.3 447.9,335.0 456.2,339.0 C454.0,347.9 443.2,355.5 436.0,348.4Z M444.5,356.0 C453.9,343.3 473.2,352.3 479.4,365.4 C467.5,373.6 446.3,371.7 444.5,356.0Z M419.9,349.3 C429.5,352.1 427.7,363.7 420.8,369.2 C413.5,364.3 410.6,352.9 419.9,349.3Z M371.0,315.5 C379.1,319.8 375.2,329.5 368.0,333.0 C362.4,327.4 362.0,316.8 371.0,315.5Z M375.2,318.6 C388.2,313.0 397.6,328.0 395.7,340.5 C383.1,341.6 368.8,331.2 375.2,318.6Z M399.1,319.1 C399.7,308.7 413.0,307.2 420.8,312.5 C417.3,321.3 405.4,327.4 399.1,319.1Z M209.5,313.8 C217.9,306.1 230.1,315.1 232.6,325.2 C223.1,329.4 208.5,325.2 209.5,313.8Z M198.3,340.9 C199.1,332.2 210.5,331.2 217.0,335.8 C213.8,343.0 203.4,348.0 198.3,340.9Z M217.2,351.5 C217.6,343.1 228.3,341.7 234.6,345.9 C231.9,353.0 222.4,358.1 217.2,351.5Z M211.5,355.8 C222.0,353.3 227.5,366.1 224.6,375.4 C214.9,374.5 205.2,364.6 211.5,355.8Z M230.1,358.3 C235.7,348.5 248.6,353.6 253.2,362.5 C245.8,369.3 231.9,369.4 230.1,358.3Z M290.5,305.5 C286.1,297.0 295.6,290.2 304.1,291.0 C305.5,299.4 299.2,309.3 290.5,305.5Z M308.4,308.3 C305.1,296.7 319.8,288.9 330.7,291.0 C330.0,302.1 318.8,314.3 308.4,308.3Z M323.5,312.1 C329.0,298.0 346.4,302.4 353.7,313.6 C345.3,324.0 327.6,326.7 323.5,312.1Z M311.2,315.0 C321.8,309.9 329.7,321.7 328.2,332.0 C317.9,333.5 306.1,325.6 311.2,315.0Z M296.1,342.8 C298.1,330.4 314.2,330.3 322.9,337.6 C317.6,347.6 302.6,353.5 296.1,342.8Z M283.5,339.0 C288.3,348.1 278.8,354.3 270.0,352.7 C268.3,344.0 274.3,334.3 283.5,339.0Z M293.3,347.1 C306.2,348.5 305.3,361.7 297.1,369.0 C286.9,364.9 281.7,352.7 293.3,347.1Z M302.7,352.2 C312.2,344.2 323.4,354.2 324.5,365.2 C314.3,369.4 300.2,364.4 302.7,352.2Z"/>
<path fill="none" stroke="#000" stroke-width="4.7" d="M257.9,293 L257.9,386"/>
<path fill="none" stroke="#000" stroke-width="4.6" d="M358.2,290 L358.2,359"/>
<path fill="none" stroke="#000" stroke-width="5.6" stroke-linejoin="miter" d="M257.9,388.2 C254.2,384.1 250.0,381.0 242.9,381.0 C233.8,381.0 229.5,386.7 229.5,396.0 C229.5,404.8 236.9,411.6 257.9,427.7 C278.9,411.6 286.2,404.8 286.2,396.0 C286.2,386.7 282.0,381.0 272.9,381.0 C265.8,381.0 261.6,384.1 257.9,388.2Z"/>
<path fill="none" stroke="#000" stroke-width="5.6" stroke-linejoin="miter" d="M358.4,360.8 C354.7,356.7 350.4,353.6 343.3,353.6 C334.3,353.6 330.0,359.3 330.0,368.7 C330.0,377.5 337.4,384.3 358.4,401.5 C379.4,384.3 386.8,377.5 386.8,368.7 C386.8,359.3 382.5,353.6 373.5,353.6 C366.4,353.6 362.1,356.7 358.4,360.8Z"/>
</svg>
<svg width="794" height="588" viewBox="0 0 794 588" style="position:absolute;left:0;top:0">
<!-- selection crosshair -->
<path d="M288.3,293V331 M269.5,312.7H309.5" stroke="#9a9a9a" stroke-width="0.8" fill="none"/>
<!-- selection box -->
<rect x="94.2" y="193.8" width="388.4" height="238" fill="none" stroke="#8a8a8a" stroke-width="1.6"/>
<g fill="#fff" stroke="#8c8c8c" stroke-width="1">
<rect x="90" y="189.6" width="8.4" height="8.4"/>
<rect x="478.4" y="189.6" width="8.4" height="8.4"/>
<rect x="90" y="427.6" width="8.4" height="8.4"/>
<rect x="478.4" y="427.6" width="8.4" height="8.4"/>
</g>
<!-- size tooltip -->
<rect x="234.6" y="165.8" width="107.4" height="15.4" rx="2" fill="#262626"/>
<text x="288.2" y="177" text-anchor="middle" font-size="9.2" textLength="89.5" lengthAdjust="spacingAndGlyphs" stroke="#fff" stroke-width="0.25" fill="#fff" font-family="Liberation Sans, sans-serif">18.08&#160; cm x 11.09&#160; cm</text>
<!-- zoom pill -->
<rect x="67.5" y="550.5" width="90" height="25" rx="12.5" fill="#e4e4e4" fill-opacity="0.85"/>
<g fill="none" stroke="#c4c4c4" stroke-width="1.2">
<circle cx="79.8" cy="563.6" r="6.6"/><path d="M76.3,563.6H83.3"/>
<circle cx="144.6" cy="563.6" r="6.6"/><path d="M141.1,563.6H148.1 M144.6,560.1V567.1"/>
</g>
<text x="112" y="569" text-anchor="middle" font-size="15" fill="#bdbdbd" font-family="Liberation Sans, sans-serif">100%</text>
</svg>


<!-- title bar -->
<div class="t" style="left:10px;top:3px;font-size:8.7px;color:#333">Cricut Design Space&nbsp; v7.29.148</div>
<div class="t" style="left:-1px;top:21px;font-size:9px;color:#333">le</div>
<div class="t" style="left:17px;top:21px;font-size:9px;color:#333">View</div>
<div class="t" style="left:45px;top:21px;font-size:9px;color:#333">Help</div>

<!-- header -->
<div class="t hd" style="left:43px">Canvas</div>
<div class="t hd" style="left:246px">Untitled*</div>
<div class="t hd" style="left:489px">My Stuff</div>
<div class="t hd" style="left:544px">Save</div>
<div class="t hd" style="left:590px;color:#ddd">|</div>
<div class="t hd" style="left:611px">Explore</div>
<div class="abs" style="left:700px;top:42px;width:110px;height:20px;border-radius:10px;background:#14895f"></div>
<div class="c" style="left:750px;top:47px;font-size:9px;font-weight:bold;color:#fff">Make It</div>
<!-- window controls + header icons -->
<svg width="794" height="588" viewBox="0 0 794 588" style="position:absolute;left:0;top:0">
<g fill="none" stroke="#666" stroke-width="0.9">
<path d="M716,5.5H723"/>
<rect x="752.5" y="2" width="6.5" height="6.5"/>
<path d="M787,1.5L794,8.5 M794,1.5L787,8.5"/>
</g>
<!-- app icon -->
<path d="M0,6.5h5" stroke="#1fa67a" stroke-width="1.6"/>
<!-- hamburger -->
<path d="M7.5,46.6H25 M7.5,51.6H25 M7.5,56.6H25" stroke="#fff" stroke-width="1.7" fill="none"/>
<!-- bell -->
<g fill="none" stroke="#fff" stroke-width="1.3" stroke-linejoin="round" stroke-linecap="round">
<path d="M466,56.2c1.6,-1.2 1.8,-2.8 1.8,-5.2c0,-3.2 1.8,-5.2 4.2,-5.2s4.2,2 4.2,5.2c0,2.4 0.2,4 1.8,5.2z"/>
<path d="M470.6,57.6a1.5,1.5 0 0 0 2.8,0"/>
<path d="M472,45.6v-1.2"/>
</g>
<!-- chevron -->
<path d="M662,48.5l5,5l5,-5" fill="none" stroke="#fff" stroke-width="1.3"/>
</svg>

<!-- sidebar -->
<svg width="43" height="588" viewBox="0 0 43 588" style="position:absolute;left:0;top:0">
<g fill="none" stroke="#444" stroke-width="1" stroke-linecap="round" stroke-linejoin="round">
<!-- New -->
<circle cx="9.5" cy="87.7" r="7"/><path d="M6,87.7H13 M9.5,84.2V91.2"/>
<!-- Templates (t-shirt) -->
<path d="M6.6,134.6l-4,2.6l1.6,3l1.8,-0.9v8h7v-8l1.8,0.9l1.6,-3l-4,-2.6c-0.6,1.4 -1.6,1.9 -2.9,1.9s-2.3,-0.5 -2.9,-1.9z"/>
<path d="M8.2,140.5v0.1 M10.8,140.5v0.1 M8.2,143.5v0.1 M10.8,143.5v0.1" stroke-width="1.1"/>
<!-- Projects (card) -->
<path d="M4.6,188.2l7.6,-1.6l2.2,2v12.4h-9.8z"/>
<path d="M9.5,196.3c-1.5,-1 -2.4,-1.8 -2.4,-2.8c0,-1.5 1.9,-1.7 2.4,-0.4c0.5,-1.3 2.4,-1.1 2.4,0.4c0,1 -0.9,1.8 -2.4,2.8z" stroke-width="0.9"/>
<path d="M7.2,198.6h4.6"/>
<!-- Shapes -->
<path d="M8,239.3l-5.4,8.6h8.2"/><circle cx="12" cy="249" r="4.3"/>
<path d="M8,239.3l3,4.8"/>
<!-- Images (bulb) -->
<path d="M7.4,304.5c-0.4,-2.2 -3.3,-3.8 -3.3,-7.2c0,-2.900 2.400,-5 5.400,-5s5.400,2.100 5.400,5c0,3.400 -2.900,5 -3.300,7.200z"/>
<path d="M9.5,292.4c-1.6,1.4 -1.9,9 -0.9,12 M9.5,292.4c1.6,1.4 1.9,9 0.9,12"/>
<path d="M7.6,306.2h3.8 M8.2,307.8h2.6"/>
<!-- Text -->
<path d="M4.8,349.6v-1.8h9.6v1.8 M9.6,347.8v10 M7.6,357.8h4" stroke-width="1.1"/>
<!-- Phrases -->
<path d="M9.5,399.2c3.8,0 6.6,2.4 6.6,5.6s-2.8,5.6 -6.6,5.6c-0.7,0 -1.4,-0.1 -2,-0.2l0.3,1.8l-2.6,-2.8c-1.4,-1 -2.3,-2.6 -2.3,-4.4c0,-3.2 2.8,-5.6 6.6,-5.6z" transform="translate(0.3,0)"/>
<path d="M6.6,403.4h6.4 M6.6,406.2h6.4"/>
<circle cx="14.5" cy="411.2" r="0.7" fill="#444" stroke="none"/>
<!-- Editable images -->
<rect x="4.6" y="450.8" width="10" height="10"/>
<g fill="#444"><rect x="3.4" y="449.6" width="2.4" height="2.4"/><rect x="13.4" y="449.6" width="2.4" height="2.4"/><rect x="3.4" y="459.6" width="2.4" height="2.4"/><rect x="13.4" y="459.6" width="2.4" height="2.4"/></g>
<path d="M6.8,445.6l0.9,2.2l2.2,0.9l-2.2,0.9l-0.9,2.2l-0.9,-2.2l-2.2,-0.9l2.2,-0.9z" fill="#444" stroke="none"/>
<!-- Upload -->
<path d="M3.6,503.8h11.8 M9.5,518.4v-11 M5.4,511.2l4.1,-4.1l4.1,4.1" stroke-width="1.1"/>
<!-- Monogram -->
<path d="M2.2,561.6h14.8 M2.2,575.6h14.8" stroke-width="1"/>
<path d="M3.4,573.4v-9.4l3,5l3,-5v9.4" stroke-width="1.1"/>
<path d="M16,565.6c-0.8,-1 -1.6,-1.6 -2.8,-1.6c-1.9,0 -3,2 -3,4.7s1.1,4.7 3,4.7c1.4,0 2.6,-0.8 2.8,-2.6v-1.3h-2.4" stroke-width="1.1"/>
</g>
<!-- scroll arrows -->
<path d="M33.5,80l3,-3.4l3,3.4z" fill="#a8a8a8"/>
</svg>
<div class="abs" style="left:0;top:0;width:29.5px;height:588px;overflow:hidden">
<div class="t side" style="left:1.5px;top:101.5px;transform-origin:0 0;transform:scaleX(0.900)">New</div>
<div class="t side" style="left:-7.1px;top:155px;transform-origin:0 0;transform:scaleX(0.890)">Templates</div>
<div class="t side" style="left:-4.9px;top:208px;transform-origin:0 0;transform:scaleX(0.890)">Projects</div>
<div class="t side" style="left:-4.2px;top:261px;transform-origin:0 0;transform:scaleX(0.890)">Shapes</div>
<div class="t side" style="left:-3.5px;top:313.5px;transform-origin:0 0;transform:scaleX(0.890)">Images</div>
<div class="t side" style="left:2.3px;top:367px;transform-origin:0 0;transform:scaleX(0.885)">Text</div>
<div class="t side" style="left:-5.6px;top:419.5px;transform-origin:0 0;transform:scaleX(0.890)">Phrases</div>
<div class="t side" style="left:-4.4px;top:469.5px;transform-origin:0 0;transform:scaleX(0.890)">Editable</div>
<div class="t side" style="left:-3.3px;top:481.5px;transform-origin:0 0;transform:scaleX(0.890)">Images</div>
<div class="t side" style="left:-2.6px;top:525.5px;transform-origin:0 0;transform:scaleX(0.890)">Upload</div>
<div class="t side" style="left:-5.6px;top:579px;transform-origin:0 0;transform:scaleX(0.890)">Monogram</div>
</div>
<!-- toolbar -->
<div class="sep" style="left:111px"></div>
<div class="sep" style="left:216px"></div>
<div class="sep" style="left:302px"></div>
<div class="sep" style="left:417px"></div>
<div class="sep" style="left:460px"></div>
<div class="t tb" style="left:124.5px;top:76.5px">Operation</div>
<div class="abs" style="left:123px;top:88.5px;width:65px;height:13px;border:1px solid #d0d0d0;background:#fff"></div>
<div class="t" style="left:128.5px;top:90.8px;font-size:8.3px;color:#444">Basic Cut</div>
<div class="abs" style="left:192px;top:88px;width:13.5px;height:13.5px;background:#000;border:1px solid #777"></div>
<div class="c tb" style="left:244px;top:76.5px">Deselect</div>
<div class="c tb" style="left:280px;top:76.5px">Edit</div>
<div class="c tb" style="left:324px;top:76.5px;color:#c8c8c8">Align</div>
<div class="c tb" style="left:359.5px;top:76.5px">Arrange</div>
<div class="c tb" style="left:394.8px;top:76.5px">Flip</div>
<div class="c tb" style="left:438.8px;top:76.5px">Offset</div>
<div class="t tb" style="left:466.5px;top:86px">More</div>
<svg width="794" height="588" viewBox="0 0 794 588" style="position:absolute;left:0;top:0">
<!-- undo / redo -->
<g fill="none" stroke-width="1.2" stroke-linecap="round" stroke-linejoin="round">
<path d="M59.8,85.6l-3.1,2.8l3.1,2.8 M56.9,88.4H66c2.3,0 3.7,1.5 3.7,3.55s-1.4,3.55 -3.7,3.55H61.4" stroke="#222"/>
<path d="M95.3,85.6l3.1,2.8l-3.1,2.8 M98.200,88.4H89.2c-2.300,0 -3.700,1.500 -3.700,3.550s1.400,3.550 3.700,3.550H93.8" stroke="#cdcdcd"/>
</g>
<!-- dropdown arrows -->
<g fill="#222">
<path d="M179.600,93l1.800,3l1.800,-3z"/>
<path d="M286.800,93.800l1.700,2.800l1.700,-2.800z"/>
<path d="M366.200,93.800l1.700,2.800l1.700,-2.800z"/>
<path d="M401.700,93.800l1.700,2.800l1.700,-2.800z"/>
<path d="M445.300,93.800l1.700,2.800l1.700,-2.800z"/>
<path d="M485.200,89l2.700,3l2.700,-3z"/>
</g>
<path d="M330.900,93.800l1.700,2.800l1.700,-2.800z" fill="#d0d0d0"/>
<!-- deselect -->
<g fill="none" stroke="#333" stroke-width="1">
<rect x="237.400" y="89" width="12" height="12" rx="2.500" stroke-dasharray="2.200 1.500"/>
<circle cx="241.200" cy="93" r="1.100"/><circle cx="245.600" cy="93" r="1.100"/><circle cx="241.200" cy="97.200" r="1.100"/>
<path d="M244.600,96.200l3.400,1.200l-1.500,0.700l-0.700,1.500z" fill="#333" stroke-width="0.6"/>
</g>
<!-- edit pencil -->
<g fill="none" stroke="#222" stroke-width="1" stroke-linejoin="round">
<path d="M272.200,100.600l0.900,-3.600l7.400,-7.400c0.700,-0.700 1.800,-0.700 2.500,0c0.700,0.700 0.700,1.800 0,2.500l-7.400,7.400z"/>
<path d="M279.300,90.800l2.500,2.500"/>
</g>
<!-- align (disabled) -->
<g fill="none" stroke="#d0d0d0" stroke-width="1">
<path d="M317.600,89.500v11.500"/><rect x="320" y="92.500" width="7.500" height="5.500" rx="0.500"/>
</g>
<!-- arrange -->
<g fill="none" stroke="#222" stroke-width="1">
<path d="M357.200,92.200v-2.700h-6.600v6.600h2.700"/>
<rect x="353.300" y="92.200" width="6.400" height="6.400" fill="#fff"/>
<path d="M359.700,95v5.800h-5.800" />
</g>
<!-- flip -->
<g stroke="#222" stroke-width="1" stroke-linejoin="round">
<path d="M391.300,88.800v12h-4.800z" fill="none"/>
<path d="M393.700,88.800v12h4.800z" fill="#222"/>
</g>
<!-- offset -->
<g fill="none" stroke="#222" stroke-width="0.9" stroke-linejoin="round">
<path d="M435.300,92.600l3.100,2.300l-1.200,3.600h-3.800l-1.200,-3.600z"/>
<path d="M435.300,89.200l6.200,4.500l-2.400,7.100h-7.600l-2.400,-7.100z" stroke-dasharray="1.500 1.200"/>
</g>
<!-- toolbar bottom border -->
<path d="M43,108.500H581" stroke="#d2d2d2" stroke-width="1"/>
<!-- canvas scrollbar arrows -->
<path d="M569.700,117.400l3,-3.400l3,3.400z" fill="#8a8a8a"/>
<path d="M569.700,573.500l3,3.400l3,-3.400z" fill="#555"/>
<path d="M47,583.500l-3,2.200l3,2.200z" fill="#555"/>
</svg>
<!-- right panel -->
<div class="t" style="left:594.5px;top:82.5px;font-size:11px;color:#1b7a5c;-webkit-text-stroke:0.3px #1b7a5c">Layers</div>
<div class="t" style="left:651.5px;top:82.5px;font-size:11px;color:#5a5a5a">Color Sync</div>
<div class="abs" style="left:582px;top:105.5px;width:212px;height:1px;background:#e4e4e4"></div>
<div class="abs" style="left:582px;top:104.5px;width:57px;height:2px;background:#1b7a5c"></div>
<div class="abs" style="left:582px;top:144px;width:212px;height:1px;background:#e8e8e8"></div>
<div class="abs" style="left:585px;top:147.500px;width:208px;height:41.500px;border-radius:3px;background:#b9ecdc"></div>
<div class="t" style="left:633.5px;top:162px;font-size:10.500px;color:#444">Family Branch 2</div>
<div class="abs" style="left:582px;top:481px;width:212px;height:38px;background:#f4f4f4"></div>
<div class="abs" style="left:589.500px;top:486px;width:40.500px;height:27.500px;background:#fff;border:1px solid #9a9a9a;border-radius:2px"></div>
<div class="t" style="left:637.500px;top:496.500px;font-size:7.8px;color:#555">Blank Canvas</div>
<div class="c" style="left:602px;top:542.500px;font-size:8.500px;color:#c4c4c4">Slice</div>
<div class="c" style="left:639.500px;top:542.500px;font-size:8.500px;color:#c4c4c4">Combine</div>
<div class="c" style="left:679.500px;top:542.500px;font-size:8.500px;color:#c4c4c4">Attach</div>
<div class="c" style="left:715.500px;top:542.500px;font-size:8.500px;color:#c4c4c4">Flatten</div>
<div class="c" style="left:754.500px;top:542.500px;font-size:8.500px;color:#444">Contour</div>
<div class="abs" style="left:582px;top:556px;width:212px;height:32px;background:#1047c8"></div>
<div class="t" style="left:624.500px;top:570px;font-size:11.2px;color:#fff;-webkit-text-stroke:0.25px #fff">Try Cricut Access for free</div>
<svg width="794" height="588" viewBox="0 0 794 588" style="position:absolute;left:0;top:0">
<!-- group (disabled) -->
<g fill="none" stroke="#dadada" stroke-width="1">
<path d="M597.500,121.500v-2.500h2.500 M605.500,119h2.500v2.500 M608,129v2.500h-2.500 M600,131.500h-2.500v-2.500"/>
<rect x="600" y="121.500" width="4" height="4"/><rect x="602" y="124" width="4" height="4"/>
</g>
<!-- duplicate -->
<g fill="none" stroke="#222" stroke-width="1.100">
<path d="M637.500,121.500v-2.500h-9.500v9.500h2.500"/>
<rect x="630.500" y="121.500" width="9.500" height="9.500" fill="#fff"/>
<path d="M632.700,126.250h5.100 M635.250,123.700v5.100"/>
</g>
<!-- trash -->
<g fill="none" stroke="#222" stroke-width="1.100" stroke-linejoin="round">
<path d="M657.500,121.500h13 M661.500,121.500v-2h5v2"/>
<path d="M659,121.500v8c0,1.400 0.800,2.200 2.200,2.200h5.600c1.400,0 2.200,-0.800 2.200,-2.200v-8"/>
<path d="M662.300,124.500v4.500 M665.700,124.500v4.500"/>
</g>
<!-- layer thumbnail (tiny branch) -->
<g stroke="#222" stroke-width="0.9" fill="none" stroke-linecap="round">
<path d="M609.500,168.500c4,0 7,-1.500 10,-2.500s5,-0.500 7.500,1.500"/>
<path d="M616,167l-1,-4 M619,166l1,-3.500 M621,166.200l3,-2 M617,167.500l1.500,3.500 M622,166.500l1.500,4 M625,167.500l1.800,2"/>
</g>
<g fill="#222">
<ellipse cx="614.800" cy="162.500" rx="1.200" ry="1.700"/><ellipse cx="620.200" cy="162" rx="1.200" ry="1.700"/>
<ellipse cx="624.500" cy="163.800" rx="1.600" ry="1.100"/><ellipse cx="618.800" cy="171.300" rx="1.300" ry="1.300"/>
<ellipse cx="623.800" cy="171" rx="1.300" ry="1.300"/><ellipse cx="627" cy="169.800" rx="1.100" ry="1.100"/>
</g>
<!-- slice -->
<g fill="none" stroke="#c8c8c8" stroke-width="1.100">
<rect x="596.500" y="524" width="8" height="8" rx="2.500"/>
<path d="M601,528.500h6.500v7.500h-7v-3.500"/>
</g>
<!-- combine -->
<g fill="none" stroke="#c8c8c8" stroke-width="1.100">
<rect x="629.500" y="524" width="8.500" height="8.500"/>
<circle cx="638.500" cy="531.500" r="4.600"/>
</g>
<path d="M646.500,528.500l2.500,2.800l2.500,-2.800z" fill="#c8c8c8"/>
<!-- attach (paperclip) -->
<g fill="none" stroke="#c8c8c8" stroke-width="1.100" stroke-linecap="round">
<path d="M684.500,527.500h-8.500c-2.200,0 -3.500,1.200 -3.500,3s1.300,3 3.500,3h8c1.200,0 2,-0.700 2,-1.700s-0.800,-1.700 -2,-1.700h-7"/>
</g>
<!-- flatten -->
<g fill="none" stroke="#c8c8c8" stroke-width="1.100" stroke-linejoin="round" stroke-linecap="round">
<path d="M715.500,522v5 M713.500,525.300l2,2l2,-2"/>
<path d="M709.500,529.500l6,3l6,-3 M709.500,532.500l6,3l6,-3"/>
</g>
<!-- contour -->
<circle cx="754.500" cy="530.500" r="7" fill="none" stroke="#222" stroke-width="1.300" stroke-dasharray="2.600 2"/>
<!-- cricut access badge -->
<path d="M594,566.500h24l-5,14.500h-17.500l-1.500,3.500z" fill="#1fa87c"/>
<text x="604.500" y="578.500" text-anchor="middle" font-size="12.5" fill="#fff" stroke="#fff" stroke-width="0.4" font-family="Liberation Sans, sans-serif">a</text>
</svg>

</body>
</html>
